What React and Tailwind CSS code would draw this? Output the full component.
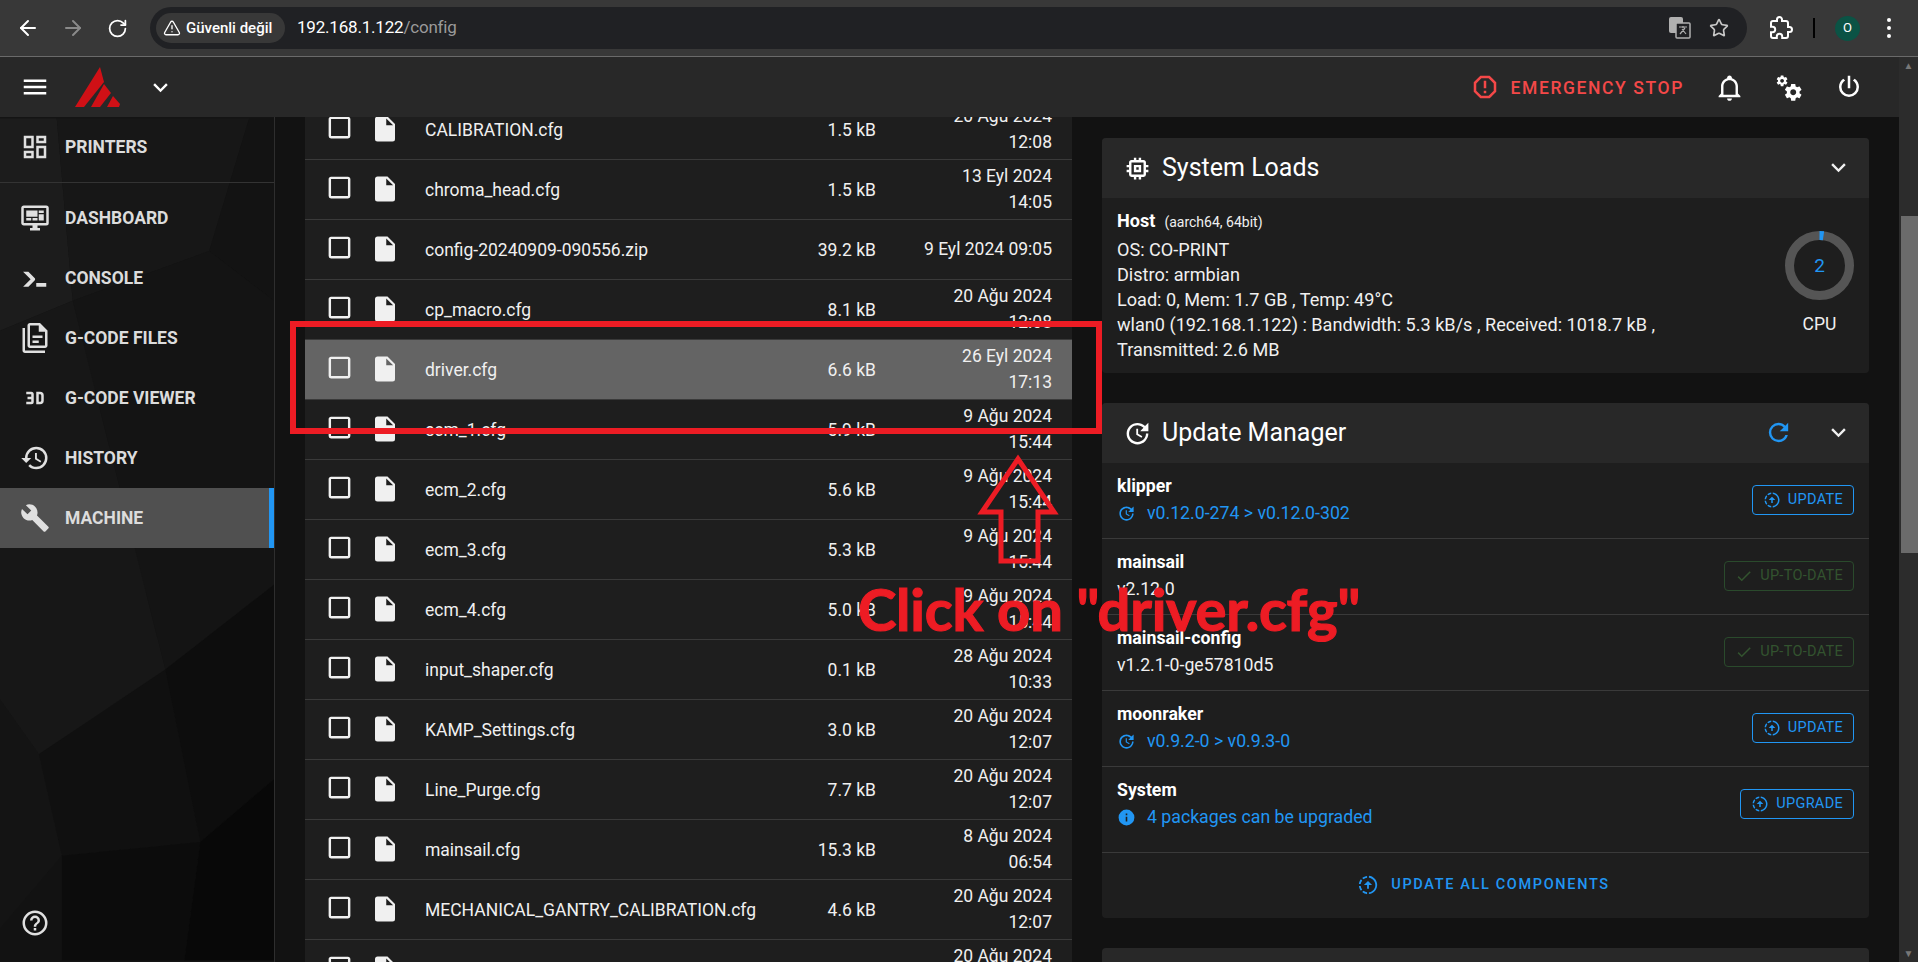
import React from "react";
import { ArrowLeft, ArrowRight, RotateCw, TriangleAlert, Star } from "lucide-react";

const P = {
  chevron: "M7.41,8.58L12,13.17L16.59,8.58L18,10L12,16L6,10L7.41,8.58Z",
  menu: "M3,6H21V8H3V6M3,11H21V13H3V11M3,16H21V18H3V16Z",
  box: "M19,3H5C3.89,3 3,3.89 3,5V19A2,2 0 0,0 5,21H19A2,2 0 0,0 21,19V5C21,3.89 20.1,3 19,3M19,5V19H5V5H19Z",
  file: "M13,9V3.5L18.5,9M6,2C4.89,2 4,2.89 4,4V20A2,2 0 0,0 6,22H18A2,2 0 0,0 20,20V8L14,2H6Z",
  printers: "M19,5V7H15V5H19M9,5V11H5V5H9M19,13V19H15V13H19M9,17V19H5V17H9M21,3H13V9H21V3M11,3H3V13H11V3M21,11H13V21H21V11M11,15H3V21H11V15Z",
  dashboard: "M21,16V4H3V16H21M21,2A2,2 0 0,1 23,4V16A2,2 0 0,1 21,18H14V20H16V22H8V20H10V18H3C1.89,18 1,17.1 1,16V4C1,2.89 1.89,2 3,2H21M5,6H14V11H5V6M15,6H19V8H15V6M19,9V14H15V9H19M5,12H9V14H5V12M10,12H14V14H10V12Z",
  console: "M13,19V16H21V19H13M8.5,13L2.47,7H6.71L11.67,11.95C12.25,12.54 12.25,13.5 11.67,14.07L6.74,19H2.5L8.5,13Z",
  files: "M16 0H8C6.9 0 6 .9 6 2V18C6 19.1 6.9 20 8 20H20C21.1 20 22 19.1 22 18V6L16 0M20 18H8V2H15V7H20V18M4 4V22H20V24H4C2.9 24 2 23.1 2 22V4H4M10 10V12H18V10H10M10 14V16H15V14H10Z",
  v3d: "M5,7H9A2,2 0 0,1 11,9V15A2,2 0 0,1 9,17H5V15H9V13H6V11H9V9H5V7M13,7H16A3,3 0 0,1 19,10V14A3,3 0 0,1 16,17H13V7M16,15A1,1 0 0,0 17,14V10A1,1 0 0,0 16,9H15V15H16Z",
  history: "M13.5,8H12V13L16.28,15.54L17,14.33L13.5,12.25V8M13,3A9,9 0 0,0 4,12H1L4.96,16.03L9,12H6A7,7 0 0,1 13,5A7,7 0 0,1 20,12A7,7 0 0,1 13,19C11.07,19 9.32,18.21 8.06,16.94L6.64,18.36C8.27,20 10.5,21 13,21A9,9 0 0,0 22,12A9,9 0 0,0 13,3",
  wrench: "M22.7,19L13.6,9.9C14.5,7.6 14,4.9 12.1,3C10.1,1 7.1,0.6 4.7,1.7L9,6L6,9L1.6,4.7C0.4,7.1 0.9,10.1 2.9,12.1C4.8,14 7.5,14.5 9.8,13.6L18.9,22.7C19.3,23.1 19.9,23.1 20.3,22.7L22.6,20.4C23.1,20 23.1,19.3 22.7,19Z",
  help: "M11,18H13V16H11V18M12,2A10,10 0 0,0 2,12A10,10 0 0,0 12,22A10,10 0 0,0 22,12A10,10 0 0,0 12,2M12,20C7.59,20 4,16.41 4,12C4,7.59 7.59,4 12,4C16.41,4 20,7.59 20,12C20,16.41 16.41,20 12,20M12,6A4,4 0 0,0 8,10H10A2,2 0 0,1 12,8A2,2 0 0,1 14,10C14,12 11,11.75 11,15H13C13,12.75 16,12.5 16,10A4,4 0 0,0 12,6Z",
  alert: "M8.27,3L3,8.27V15.73L8.27,21H15.73C17.5,19.24 21,15.73 21,15.73V8.27L15.73,3M9.1,5H14.9L19,9.1V14.9L14.9,19H9.1L5,14.9V9.1M11,15H13V17H11V15M11,7H13V13H11V7",
  bell: "M10 21H14C14 22.1 13.1 23 12 23S10 22.1 10 21M21 19V20H3V19L5 17V11C5 7.9 7 5.2 10 4.3V4C10 2.9 10.9 2 12 2S14 2.9 14 4V4.3C17 5.2 19 7.9 19 11V17L21 19M17 11C17 8.2 14.8 6 12 6S7 8.2 7 11V18H17V11Z",
  cogs: "M15.9,18.45C17.25,18.45 18.35,17.35 18.35,16C18.35,14.65 17.25,13.55 15.9,13.55C14.54,13.55 13.45,14.65 13.45,16C13.45,17.35 14.54,18.45 15.9,18.45M21.1,16.68L22.58,17.84C22.71,17.95 22.75,18.13 22.66,18.29L21.26,20.71C21.17,20.86 21,20.92 20.83,20.86L19.09,20.16C18.73,20.44 18.33,20.67 17.91,20.85L17.64,22.7C17.62,22.87 17.47,23 17.3,23H14.5C14.32,23 14.18,22.87 14.15,22.7L13.89,20.85C13.46,20.67 13.07,20.44 12.71,20.16L10.96,20.86C10.81,20.92 10.62,20.86 10.54,20.71L9.14,18.29C9.05,18.13 9.09,17.95 9.22,17.84L10.7,16.68L10.65,16L10.7,15.31L9.22,14.16C9.09,14.05 9.05,13.86 9.14,13.71L10.54,11.29C10.62,11.13 10.81,11.07 10.96,11.13L12.71,11.84C13.07,11.56 13.46,11.32 13.89,11.15L14.15,9.29C14.18,9.13 14.32,9 14.5,9H17.3C17.47,9 17.62,9.13 17.64,9.29L17.91,11.15C18.33,11.32 18.73,11.56 19.09,11.84L20.83,11.13C21,11.07 21.17,11.13 21.26,11.29L22.66,13.71C22.75,13.86 22.71,14.05 22.58,14.16L21.1,15.31L21.15,16L21.1,16.68M6.69,8.07C7.56,8.07 8.26,7.37 8.26,6.5C8.26,5.63 7.56,4.92 6.69,4.92A1.57,1.57 0 0,0 5.11,6.5C5.11,7.37 5.82,8.07 6.69,8.07M10.03,6.94L11,7.68C11.07,7.75 11.09,7.87 11.03,7.97L10.13,9.53C10.08,9.63 9.96,9.67 9.86,9.63L8.74,9.18L8,9.62L7.81,10.81C7.79,10.92 7.7,11 7.59,11H5.79C5.67,11 5.58,10.92 5.56,10.81L5.4,9.62L4.64,9.18L3.5,9.63C3.41,9.67 3.3,9.63 3.24,9.53L2.34,7.97C2.28,7.87 2.31,7.75 2.39,7.68L3.34,6.94L3.31,6.5L3.34,6.06L2.39,5.32C2.31,5.25 2.28,5.13 2.34,5.03L3.24,3.47C3.3,3.37 3.41,3.33 3.5,3.37L4.63,3.82L5.4,3.38L5.56,2.19C5.58,2.08 5.67,2 5.79,2H7.59C7.7,2 7.79,2.08 7.81,2.19L8,3.38L8.74,3.82L9.86,3.37C9.96,3.33 10.08,3.37 10.13,3.47L11.03,5.03C11.09,5.13 11.07,5.25 11,5.32L10.03,6.06L10.06,6.5L10.03,6.94Z",
  power: "M16.56,5.44L15.11,6.89C16.84,7.94 18,9.83 18,12A6,6 0 0,1 12,18A6,6 0 0,1 6,12C6,9.83 7.16,7.94 8.88,6.88L7.44,5.44C5.36,6.88 4,9.28 4,12A8,8 0 0,0 12,20A8,8 0 0,0 20,12C20,9.28 18.64,6.88 16.56,5.44M13,3H11V13H13",
  check: "M21,7L9,19L3.5,13.5L4.91,12.09L9,16.17L19.59,5.59L21,7Z",
  info: "M13,9H11V7H13M13,17H11V11H13M12,2A10,10 0 0,0 2,12A10,10 0 0,0 12,22A10,10 0 0,0 22,12A10,10 0 0,0 12,2Z",
  memory: "M17,17H7V7H17M21,11V9H19V7C19,5.89 18.1,5 17,5H15V3H13V5H11V3H9V5H7C5.89,5 5,5.89 5,7V9H3V11H5V13H3V15H5V17A2,2 0 0,0 7,19H9V21H11V19H13V21H15V19H17A2,2 0 0,0 19,17V15H21V13H19V11M13,13H11V11H13M15,9H9V15H15V9Z",
  update: "M21,10.12H14.22L16.96,7.3C14.23,4.6 9.81,4.5 7.08,7.2C4.35,9.91 4.35,14.28 7.08,17C9.81,19.7 14.23,19.7 16.96,17C18.32,15.65 19,14.08 19,12.1H21C21,14.08 20.12,16.65 18.36,18.39C14.85,21.87 9.15,21.87 5.64,18.39C2.14,14.92 2.11,9.28 5.62,5.81C9.13,2.34 14.76,2.34 18.27,5.81L21,3V10.12M12.5,8V12.25L16,14.33L15.28,15.54L11,13V8H12.5Z",
  refresh: "M17.65,6.35C16.2,4.9 14.21,4 12,4A8,8 0 0,0 4,12A8,8 0 0,0 12,20C15.73,20 18.84,17.45 19.73,14H17.65C16.83,16.33 14.61,18 12,18A6,6 0 0,1 6,12A6,6 0 0,1 12,6C13.66,6 15.14,6.69 16.22,7.78L13,11H20V4L17.65,6.35Z",
  progress: "M13,2.03C17.73,2.5 21.5,6.25 21.95,11C22.5,16.5 18.5,21.38 13,21.93V19.93C16.64,19.5 19.5,16.61 19.96,12.97C20.5,8.58 17.39,4.59 13,4.05V2.05L13,2.03M11,2.06V4.06C9.57,4.26 8.22,4.84 7.1,5.74L5.67,4.26C7.19,3 9.05,2.25 11,2.06M4.26,5.67L5.69,7.1C4.8,8.23 4.24,9.58 4.05,11H2.05C2.25,9.04 3,7.19 4.26,5.67M2.06,13H4.06C4.24,14.42 4.81,15.77 5.69,16.9L4.27,18.33C3.03,16.81 2.26,14.96 2.06,13M7.1,18.37C8.23,19.25 9.58,19.82 11,20V22C9.04,21.79 7.18,21 5.67,19.74L7.1,18.37M12,7.5L16.5,12H13V16H11V12H7.5L12,7.5Z",
  puzzle: "M20.5,11H19V7C19,5.89 18.1,5 17,5H13V3.5A2.5,2.5 0 0,0 10.5,1A2.5,2.5 0 0,0 8,3.5V5H4A2,2 0 0,0 2,7V10.8H3.5C5,10.8 6.2,12 6.2,13.5C6.2,15 5,16.2 3.5,16.2H2V20A2,2 0 0,0 4,22H7.8V20.5C7.8,19 9,17.8 10.5,17.8C12,17.8 13.2,19 13.2,20.5V22H17A2,2 0 0,0 19,20V16H20.5A2.5,2.5 0 0,0 23,13.5A2.5,2.5 0 0,0 20.5,11Z",
};

function Icon({ d, className }) {
  return (
    <svg viewBox="0 0 24 24" fill="currentColor" className={className}>
      <path d={d} />
    </svg>
  );
}

const nav = [
  ["DASHBOARD", P.dashboard],
  ["CONSOLE", P.console],
  ["G-CODE FILES", P.files],
  ["G-CODE VIEWER", P.v3d],
  ["HISTORY", P.history],
  ["MACHINE", P.wrench, true],
];

const rows = [
  ["CALIBRATION.cfg", "1.5 kB", "20 Ağu 2024", "12:08"],
  ["chroma_head.cfg", "1.5 kB", "13 Eyl 2024", "14:05"],
  ["config-20240909-090556.zip", "39.2 kB", "9 Eyl 2024 09:05", null],
  ["cp_macro.cfg", "8.1 kB", "20 Ağu 2024", "12:08"],
  ["driver.cfg", "6.6 kB", "26 Eyl 2024", "17:13", true],
  ["ecm_1.cfg", "5.9 kB", "9 Ağu 2024", "15:44"],
  ["ecm_2.cfg", "5.6 kB", "9 Ağu 2024", "15:44"],
  ["ecm_3.cfg", "5.3 kB", "9 Ağu 2024", "15:44"],
  ["ecm_4.cfg", "5.0 kB", "9 Ağu 2024", "15:44"],
  ["input_shaper.cfg", "0.1 kB", "28 Ağu 2024", "10:33"],
  ["KAMP_Settings.cfg", "3.0 kB", "20 Ağu 2024", "12:07"],
  ["Line_Purge.cfg", "7.7 kB", "20 Ağu 2024", "12:07"],
  ["mainsail.cfg", "15.3 kB", "8 Ağu 2024", "06:54"],
  ["MECHANICAL_GANTRY_CALIBRATION.cfg", "4.6 kB", "20 Ağu 2024", "12:07"],
  ["moonraker.cfg", "1.2 kB", "20 Ağu 2024", "12:07"],
];

const polys = [
  ["0,0 57,0 73,183 0,213", "#1c1c1c"],
  ["57,0 250,0 210,133 73,183", "#171717"],
  ["250,0 275,0 275,183 210,133", "#131313"],
  ["0,213 73,183 166,553 39,638 0,583", "#171717"],
  ["73,183 210,133 275,183 275,468 166,553", "#141414"],
  ["39,638 166,553 201,726 62,740", "#101010"],
  ["166,553 275,468 275,663 201,726", "#0d0d0d"],
  ["0,583 39,638 62,740 0,813", "#141414"],
  ["62,740 201,726 185,845 62,845", "#0c0c0c"],
  ["201,726 275,663 275,845 185,845", "#080808"],
  ["0,813 62,740 62,845 0,845", "#121212"],
];

function NavItem({ label, icon, active }) {
  return (
    <div className={"relative flex h-[60px] items-center gap-[15px] pl-5 " + (active ? "bg-[#505050]" : "")}>
      <Icon d={icon} className="h-[30px] w-[30px] text-[#e0e0e0]" />
      <span className="text-[17.5px] font-bold text-[#dcdcdc]">{label}</span>
      {active && <div className="absolute inset-y-0 right-0 w-[5px] bg-[#2196f3]" />}
    </div>
  );
}

function Row({ name, size, date, time, active }) {
  return (
    <div className={"flex h-[60px] shrink-0 items-center border-b border-[#3a3a3a] pl-5 pr-5 text-[17.5px] text-[#f0f0f0] " + (active ? "bg-[#646464]" : "")}>
      <Icon d={P.box} className="-mt-[5px] h-[29px] w-[29px] shrink-0" />
      <Icon d={P.file} className="-mt-[1px] ml-[16px] h-[30px] w-[30px] shrink-0" />
      <span className="ml-[25px] mt-[1px] flex-1">{name}</span>
      <span className="mt-[1px] w-[100px] text-right">{size}</span>
      <div className="-mt-[1px] w-[176px] text-right leading-[26px]">
        <div>{date}</div>
        {time && <div>{time}</div>}
      </div>
    </div>
  );
}

function CardHeader({ icon, title, children }) {
  return (
    <div className="flex h-[60px] items-center rounded-t bg-[#282828] pl-[21px] pr-[16px] text-white">
      <Icon d={icon} className="h-[29px] w-[29px]" />
      <span className="ml-[10px] flex-1 text-[25px]">{title}</span>
      {children}
      <Icon d={P.chevron} className="-mt-[1px] h-[29px] w-[29px] text-[#f0f0f0]" />
    </div>
  );
}

function Btn({ label, ok }) {
  return (
    <div className={"flex h-[30px] items-center gap-[7px] rounded-[4px] border px-[10px] text-[14.5px] tracking-[0.3px] " + (ok ? "border-[#2a4a2c] text-[#33532f]" : "border-[#2196f3] text-[#2196f3]")}>
      <Icon d={ok ? P.check : P.progress} className="h-[18px] w-[18px]" />
      {label}
    </div>
  );
}

function UpdateRow({ name, version, link, icon, btn, ok, tall }) {
  return (
    <div className={"flex items-start justify-between border-b border-[#3a3a3a] pl-[15px] pr-[15px] pt-[10px] " + (tall ? "h-[86px]" : "h-[76px]")}>
      <div className="text-[17.7px] leading-[27px]">
        <div className="font-bold text-white">{name}</div>
        <div className={"flex items-center " + (link ? "text-[#2196f3]" : "text-[#f0f0f0]")}>
          {icon && <Icon d={icon} className="mr-[11px] h-[19px] w-[19px]" />}
          {version}
        </div>
      </div>
      <div className="mt-[12px]">
        <Btn label={btn} ok={ok} />
      </div>
    </div>
  );
}

export default function App() {
  return (
    <div className="relative flex h-[962px] w-[1918px] flex-col overflow-hidden bg-[#121212] font-['Roboto',sans-serif]">
      {/* browser chrome */}
      <div className="flex h-[57px] shrink-0 items-center border-b border-[#6a6a6a] bg-[#383838] text-white">
        <ArrowLeft className="ml-[16px] h-[24px] w-[24px]" strokeWidth={2} />
        <ArrowRight className="ml-[21px] h-[24px] w-[24px] text-[#8a8a8a]" strokeWidth={2} />
        <RotateCw className="ml-[22px] h-[21px] w-[21px]" strokeWidth={2} />
        <div className="ml-[22px] flex h-[42px] w-[1597px] items-center rounded-full bg-[#202124] pl-[6px] pr-[18px]">
          <div className="flex h-[30px] w-[129px] items-center rounded-full bg-[#383838] pl-[7px] text-[15px] font-medium">
            <TriangleAlert className="h-[18px] w-[18px]" strokeWidth={1.8} />
            <span className="ml-[5px] whitespace-nowrap">Güvenli değil</span>
          </div>
          <span className="ml-[12px] flex-1 text-[17px] tracking-[-0.2px]">
            192.168.1.122<span className="text-[#9a9a9a]">/config</span>
          </span>
          <svg viewBox="0 0 22 22" className="mr-[4px] h-[22px] w-[22px]">
            <rect x="0" y="0" width="14" height="16" rx="2" fill="#b0b0b0" />
            <rect x="7" y="6" width="14" height="15" rx="1" fill="#202124" stroke="#b0b0b0" strokeWidth="1.5" />
            <path d="M10 10h8M14 9v2M11 17l5-6M13 12l4 5" stroke="#b0b0b0" strokeWidth="1.2" fill="none" />
          </svg>
          <Star className="ml-[14px] h-[20px] w-[20px] text-[#c8c8c8]" strokeWidth={2} />
        </div>
        <svg viewBox="0 0 24 24" fill="none" stroke="currentColor" strokeWidth="2" className="ml-[22px] h-[24px] w-[24px]">
          <path d={P.puzzle} />
        </svg>
        <div className="ml-[20px] h-[20px] w-[2px] bg-black" />
        <div className="ml-[20px] flex h-[25px] w-[25px] items-center justify-center rounded-full bg-[#0b5345] text-[13px]">O</div>
        <div className="ml-[27px] flex flex-col gap-[4px]">
          <div className="h-[4px] w-[4px] rounded-full bg-white" />
          <div className="h-[4px] w-[4px] rounded-full bg-white" />
          <div className="h-[4px] w-[4px] rounded-full bg-white" />
        </div>
      </div>

      <div className="flex min-h-0 flex-1">
        <div className="flex min-w-0 flex-1 flex-col">
          {/* app bar */}
          <div className="relative z-10 flex h-[60px] shrink-0 items-center bg-[#282828] text-white">
            <Icon d={P.menu} className="ml-[20px] h-[30px] w-[30px]" />
            <svg viewBox="0 0 45 40" className="ml-[25px] h-[40px] w-[45px]" fill="#d01016">
              <polygon points="25,0 29,15 9,40 0,40" />
              <polygon points="29,17 36,26 25,40 16,40" />
              <polygon points="38,29 45,37 44,40 32,40" />
            </svg>
            <Icon d={P.chevron} className="ml-[26px] h-[29px] w-[29px]" />
            <div className="flex-1" />
            <Icon d={P.alert} className="h-[30px] w-[30px] text-[#f44848]" />
            <span className="ml-[11px] mt-[2px] text-[17.5px] font-medium tracking-[1.6px] text-[#f44848]">EMERGENCY STOP</span>
            <Icon d={P.bell} className="ml-[31px] h-[29px] w-[29px]" />
            <Icon d={P.cogs} className="ml-[30px] h-[29px] w-[29px]" />
            <Icon d={P.power} className="ml-[31px] mr-[35px] h-[30px] w-[30px]" />
          </div>

          <div className="flex min-h-0 flex-1">
            {/* sidebar */}
            <div className="relative z-[5] h-full w-[275px] shrink-0 overflow-hidden border-r border-[#2e2e2e] bg-[#141414]">
              <svg viewBox="0 0 275 845" className="absolute inset-0 h-full w-full">
                {polys.map(([pts, c], i) => (
                  <polygon key={i} points={pts} fill={c} />
                ))}
              </svg>
              <div className="relative flex h-full flex-col">
                <div className="h-[66px] shrink-0 border-b border-[#333333]">
                  <NavItem label="PRINTERS" icon={P.printers} />
                </div>
                <div className="pt-[5px]">
                  {nav.map(([l, i, a]) => (
                    <NavItem key={l} label={l} icon={i} active={a} />
                  ))}
                </div>
                <div className="mt-auto pb-[24px] pl-5">
                  <Icon d={P.help} className="h-[30px] w-[30px] text-[#e0e0e0]" />
                </div>
              </div>
            </div>

            {/* files */}
            <div className="-mt-[17px] ml-[30px] flex w-[767px] shrink-0 flex-col bg-[#1e1e1e]">
              {rows.map(([n, s, d, t, a]) => (
                <Row key={n} name={n} size={s} date={d} time={t} active={a} />
              ))}
            </div>

            {/* right column */}
            <div className="ml-[30px] flex w-[767px] shrink-0 flex-col gap-[30px] pt-[21px]">
              <div className="h-[235px] shrink-0 rounded bg-[#1e1e1e]">
                <CardHeader icon={P.memory} title="System Loads" />
                <div className="flex justify-between pl-[15px] pr-[15px] pt-[8px] text-[18.1px] leading-[25px] text-[#f0f0f0]">
                  <div>
                    <div className="leading-[30px]"><span className="font-bold text-white">Host</span><span className="ml-[9px] text-[14px]">(aarch64, 64bit)</span></div>
                    <div>OS: CO-PRINT</div>
                    <div>Distro: armbian</div>
                    <div>Load: 0, Mem: 1.7 GB , Temp: 49°C</div>
                    <div>wlan0 (192.168.1.122) : Bandwidth: 5.3 kB/s , Received: 1018.7 kB ,</div>
                    <div>Transmitted: 2.6 MB</div>
                  </div>
                  <div className="flex w-[69px] flex-col items-center pt-[25px]">
                    <div className="relative flex h-[69px] w-[69px] items-center justify-center">
                      <svg viewBox="0 0 69 69" className="absolute inset-0 h-full w-full">
                        <circle cx="34.5" cy="34.5" r="30" fill="none" stroke="#555555" strokeWidth="9" />
                        <path d="M34.5 4.5 A30 30 0 0 1 38.5 4.8" fill="none" stroke="#2196f3" strokeWidth="9" />
                      </svg>
                      <span className="text-[19px] text-[#2196f3]">2</span>
                    </div>
                    <div className="mt-[12px] text-[17.5px]">CPU</div>
                  </div>
                </div>
              </div>

              <div className="h-[515px] shrink-0 rounded bg-[#1e1e1e]">
                <CardHeader icon={P.update} title="Update Manager">
                  <Icon d={P.refresh} className="-mt-[1px] mr-[31px] h-[29px] w-[29px] text-[#2196f3]" />
                </CardHeader>
                <UpdateRow name="klipper" version="v0.12.0-274 > v0.12.0-302" link icon={P.update} btn="UPDATE" />
                <UpdateRow name="mainsail" version="v2.12.0" btn="UP-TO-DATE" ok />
                <UpdateRow name="mainsail-config" version="v1.2.1-0-ge57810d5" btn="UP-TO-DATE" ok />
                <UpdateRow name="moonraker" version="v0.9.2-0 > v0.9.3-0" link icon={P.update} btn="UPDATE" />
                <UpdateRow name="System" version="4 packages can be upgraded" link icon={P.info} btn="UPGRADE" tall />
                <div className="-mt-[1px] flex h-[66px] items-center justify-center gap-[12px] pr-[4px] text-[14.5px] font-medium tracking-[1.65px] text-[#2196f3]">
                  <Icon d={P.progress} className="h-[22px] w-[22px]" />
                  UPDATE ALL COMPONENTS
                </div>
              </div>

              <div className="h-[60px] shrink-0 rounded bg-[#282828]" />
            </div>
          </div>
        </div>

        {/* page scrollbar */}
        <div className="flex w-[19px] shrink-0 flex-col items-end bg-[#2c2c2c]">
          <div className="flex h-[17px] w-full items-center justify-center text-[10px] leading-none text-[#777777]">▲</div>
          <div className="mt-[142px] h-[337px] w-[17px] bg-[#6b6b6b]" />
          <div className="mt-auto flex h-[17px] w-full items-center justify-center text-[10px] leading-none text-[#777777]">▼</div>
        </div>
      </div>

      {/* annotations drawn over the screenshot */}
      <div className="absolute left-[290px] top-[321px] z-20 h-[113px] w-[812px] border-[6px] border-[#ed1c24]" />
      <svg className="absolute left-[975px] top-[450px] z-20 h-[120px] w-[90px]" viewBox="0 0 90 120" fill="none" stroke="#ed1c24" strokeWidth="5">
        <polygon points="43,9 79,62 63,62 63,111 26,111 26,62 7,62" />
      </svg>
      <div className="absolute left-[858px] top-[574px] z-20 whitespace-nowrap font-['Lato',sans-serif] text-[58px] font-bold leading-[70px] tracking-[-0.25px] text-[#ed1c24] [-webkit-text-stroke:1.2px_#ed1c24]">
        Click on "driver.cfg"
      </div>
    </div>
  );
}
